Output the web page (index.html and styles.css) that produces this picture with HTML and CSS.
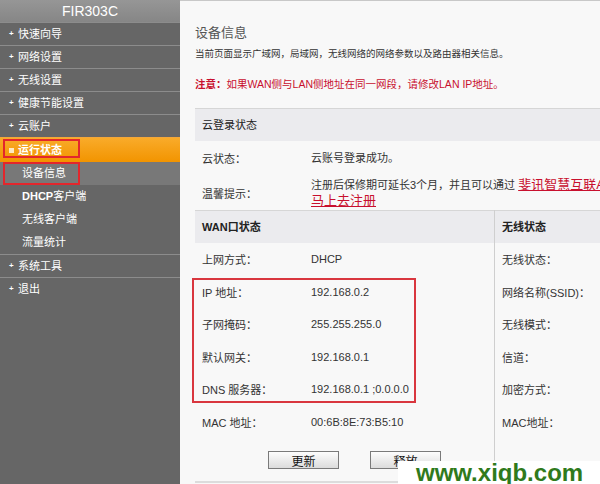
FILE: index.html
```html
<!DOCTYPE html>
<html lang="zh-CN">
<head>
  <meta charset="UTF-8">
  <meta name="viewport" content="width=device-width, initial-scale=1.0">
  <title>FIR303C</title>
  <link rel="stylesheet" href="styles.css">
</head>
<body>
  <div class="sidebar">
    <div class="model">FIR303C</div>
    <div class="menu-item"><span class="plus">+</span>快速向导</div>
    <div class="menu-item"><span class="plus">+</span>网络设置</div>
    <div class="menu-item"><span class="plus">+</span>无线设置</div>
    <div class="menu-item"><span class="plus">+</span>健康节能设置</div>
    <div class="menu-item"><span class="plus">+</span>云账户</div>
    <div class="menu-item active"><span class="square"></span>运行状态<span class="mark"></span></div>
    <div class="sub-item current">设备信息<span class="mark mark-sub"></span></div>
    <div class="sub-item"><b>DHCP</b>客户端</div>
    <div class="sub-item">无线客户端</div>
    <div class="sub-item">流量统计</div>
    <div class="menu-item"><span class="plus">+</span>系统工具</div>
    <div class="menu-item"><span class="plus">+</span>退出</div>
  </div>

  <div class="main">
    <h3 class="page-title">设备信息</h3>
    <p class="desc">当前页面显示广域网，局域网，无线网络的网络参数以及路由器相关信息。</p>
    <p class="notice"><b>注意：</b>如果WAN侧与LAN侧地址在同一网段，请修改LAN IP地址。</p>

    <div class="panel">
      <div class="panel-head">云登录状态</div>
      <div class="row cloud-row">
        <span class="label">云状态：</span>
        <span class="value">云账号登录成功。</span>
      </div>
      <div class="row cloud-row tall">
        <span class="label">温馨提示：</span>
        <span class="value">注册后保修期可延长3个月，并且可以通过 <a href="#" class="link">斐讯智慧互联APP</a><br><a href="#" class="link">马上去注册</a></span>
      </div>
    </div>

    <div class="status">
      <div class="wan">
        <div class="panel-head bold">WAN口状态</div>
        <div class="row"><span class="label">上网方式：</span><span class="value">DHCP</span></div>
        <div class="row"><span class="label">IP 地址：</span><span class="value">192.168.0.2</span></div>
        <div class="row"><span class="label">子网掩码：</span><span class="value">255.255.255.0</span></div>
        <div class="row"><span class="label">默认网关：</span><span class="value">192.168.0.1</span></div>
        <div class="row"><span class="label">DNS 服务器：</span><span class="value">192.168.0.1 ;0.0.0.0</span></div>
        <div class="row"><span class="label">MAC 地址：</span><span class="value">00:6B:8E:73:B5:10</span></div>
        <div class="buttons">
          <button class="btn">更新</button>
          <button class="btn">释放</button>
        </div>
        <div class="wan-mark"></div>
      </div>
      <div class="wifi">
        <div class="panel-head bold">无线状态</div>
        <div class="row"><span class="label">无线状态：</span></div>
        <div class="row"><span class="label">网络名称(SSID)：</span></div>
        <div class="row"><span class="label">无线模式：</span></div>
        <div class="row"><span class="label">信道：</span></div>
        <div class="row"><span class="label">加密方式：</span></div>
        <div class="row"><span class="label">MAC地址：</span></div>
      </div>
    </div>
  </div>

  <div class="watermark">www.xiqb.com</div>
</body>
</html>
```

FILE: styles.css
```css
body{
  margin: 0;
  width: 600px;
  height: 484px;
  overflow: hidden;
  display: flex;
  position: relative;
  font-family: "Liberation Sans", "Noto Sans CJK SC", sans-serif;
  font-size: 11px;
  color: #333;
}

/* sidebar */

.sidebar{
  width: 180px;
  flex-shrink: 0;
  background-color: #666;
  color: white;
}

.model{
  height: 22px;
  line-height: 22px;
  text-align: center;
  font-size: 14px;
  background: linear-gradient(#969696, #868686);
}

.menu-item{
  position: relative;
  height: 22px;
  line-height: 22px;
  border-top: 1px solid #8c8c8c;
  padding-left: 18px;
}

.plus{
  position: absolute;
  left: 9px;
  top: 0;
  font-size: 8px;
  font-weight: bold;
}

.menu-item.active{
  height: 24px;
  line-height: 24px;
  font-weight: bold;
  border-top-color: #f3a73a;
  background: linear-gradient(#f9ab2a, #f29400);
}

.square{
  position: absolute;
  left: 9px;
  top: 10px;
  width: 5px;
  height: 5px;
  background-color: #fde9c4;
}

.sub-item{
  position: relative;
  height: 23px;
  line-height: 23px;
  padding-left: 22px;
}

.sub-item.current{
  background-color: #787878;
}

.mark{
  position: absolute;
  left: 3px;
  top: 1px;
  width: 73px;
  height: 15px;
  border: 2px solid #e3262c;
}

.mark-sub{
  top: 0;
  height: 19px;
}

/* main */

.main{
  flex: 1;
  min-width: 0;
  overflow: hidden;
  background-color: #f8f8f8;
  border-top: 1px solid #c8c8c8;
  padding-left: 15px;
  white-space: nowrap;
}

.page-title{
  margin: 24px 0 0;
  font-size: 13px;
  line-height: 16px;
  font-weight: normal;
  color: #555;
}

.desc{
  margin: 6px 0 0;
  font-size: 9.5px;
  line-height: 14px;
}

.notice{
  margin: 16px 0 0;
  font-size: 10.5px;
  line-height: 14px;
  color: #c8102e;
}

.panel{
  margin-top: 17px;
}

.panel-head{
  height: 33px;
  line-height: 32px;
  box-sizing: border-box;
  border-top: 1px solid #d6d6d6;
  background-color: #ebebee;
  padding-left: 7px;
  font-size: 11px;
  color: #222;
}

.panel-head.bold{
  font-weight: bold;
}

.row{
  display: flex;
  align-items: center;
  height: 32.5px;
  padding-left: 7px;
}

.cloud-row{
  height: 34px;
}

.cloud-row.tall{
  height: 35px;
}

.label{
  width: 109px;
  flex-shrink: 0;
}

.value{
  line-height: 16px;
}

.link{
  color: #c8102e;
  font-size: 13px;
}

.status{
  display: flex;
  border-bottom: 2px solid #dcdcdc;
}

.wan{
  position: relative;
  width: 299px;
  flex-shrink: 0;
}

.wifi{
  flex: 1;
  border-left: 1px solid #cfcfcf;
}

.buttons{
  display: flex;
  gap: 31px;
  padding: 13px 0 12px 73px;
}

.btn{
  width: 71px;
  height: 18px;
  padding: 0;
  font-family: inherit;
  font-size: 12px;
  color: #111;
  border: 1px solid #7a7a7a;
  background: linear-gradient(#fdfdfd, #dcdcdc);
}

.wan-mark{
  position: absolute;
  left: -3px;
  top: 68px;
  width: 220px;
  height: 121px;
  border: 2px solid #d9363e;
}

.watermark{
  position: absolute;
  left: 398px;
  top: 461px;
  width: 202px;
  height: 23px;
  line-height: 23px;
  padding-left: 18px;
  box-sizing: border-box;
  background-color: white;
  color: #2f7a1c;
  font-size: 24px;
  font-weight: bold;
}
```
